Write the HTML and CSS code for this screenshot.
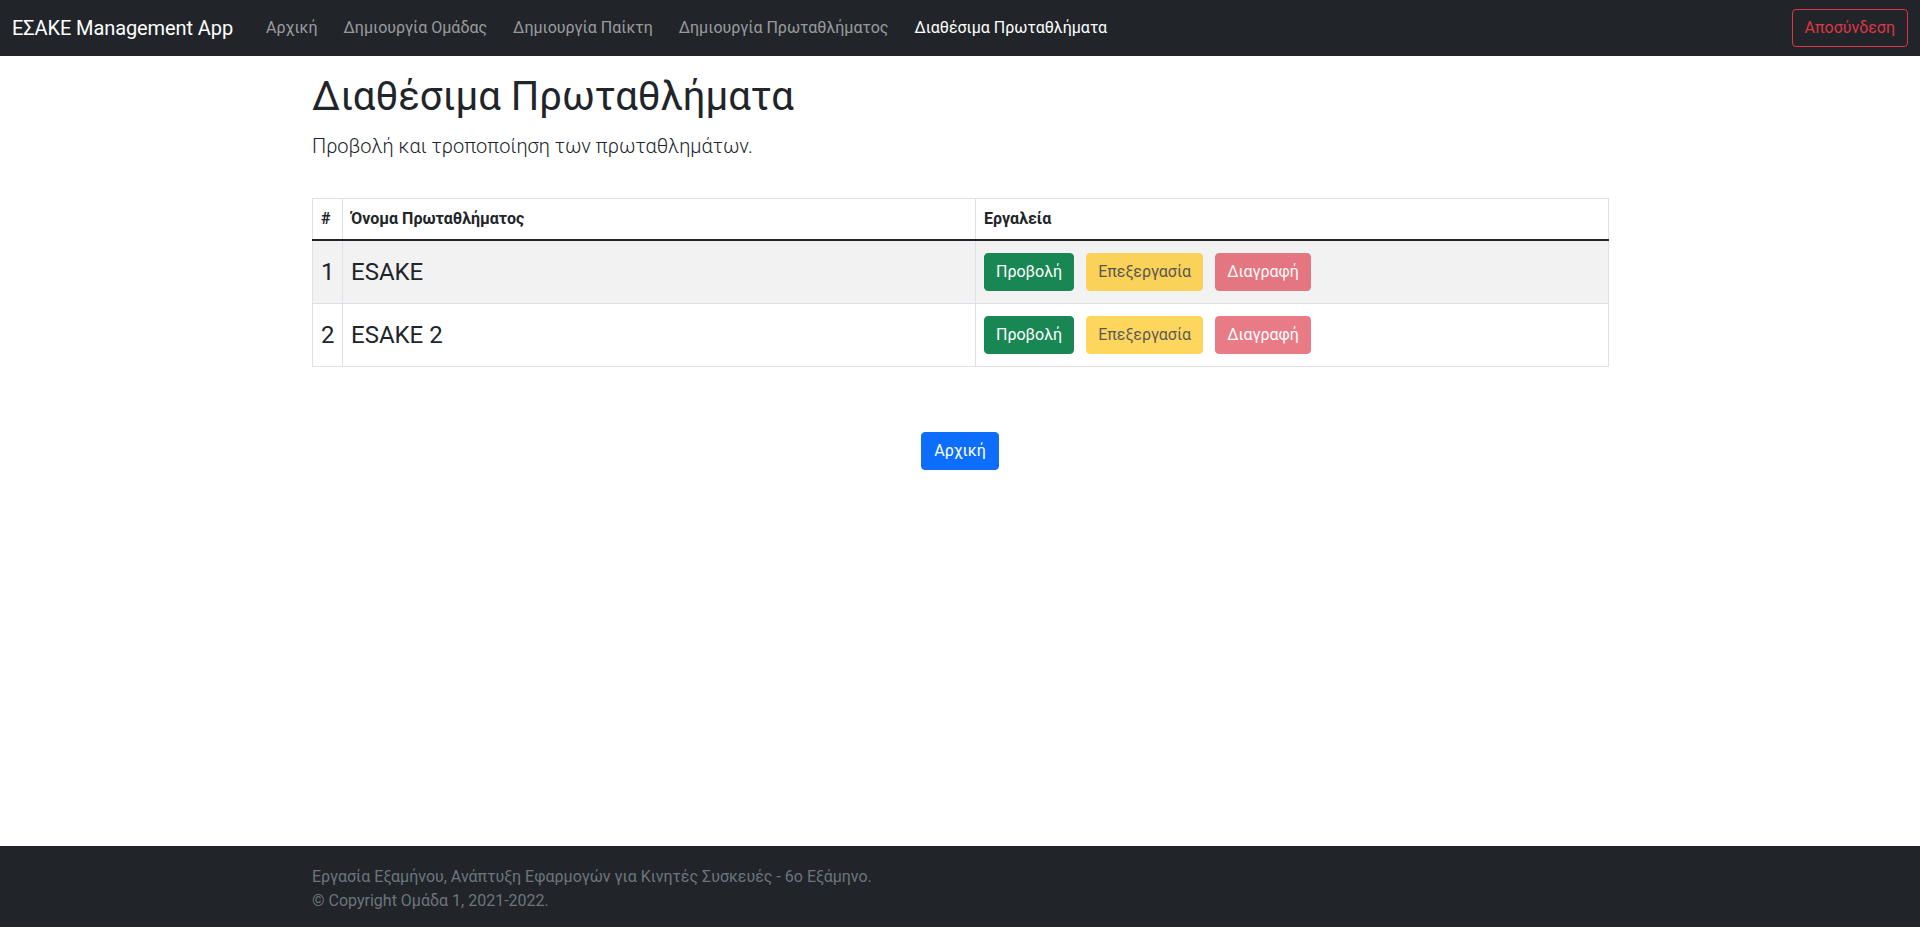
FILE: index.html
```html
<!DOCTYPE html>
<html lang="el">
<head>
<meta charset="utf-8">
<title>ΕΣΑΚΕ Management App</title>
<link rel="stylesheet" href="styles.css">
</head>
<body>
<nav class="navbar">
  <a class="brand" href="#">ΕΣΑΚΕ Management App</a>
  <ul class="nav">
    <li><a class="nav-link" href="#">Αρχική</a></li>
    <li><a class="nav-link" href="#">Δημιουργία Ομάδας</a></li>
    <li><a class="nav-link" href="#">Δημιουργία Παίκτη</a></li>
    <li><a class="nav-link" href="#">Δημιουργία Πρωταθλήματος</a></li>
    <li><a class="nav-link active" href="#">Διαθέσιμα Πρωταθλήματα</a></li>
  </ul>
  <button class="btn btn-outline-danger logout">Αποσύνδεση</button>
</nav>

<main class="main">
  <div class="container">
    <h1 class="title">Διαθέσιμα Πρωταθλήματα</h1>
    <p class="lead">Προβολή και τροποποίηση των πρωταθλημάτων.</p>

    <table class="table">
      <colgroup>
        <col class="col-num">
        <col class="col-name">
        <col class="col-tools">
      </colgroup>
      <thead>
        <tr>
          <th>#</th>
          <th>Όνομα Πρωταθλήματος</th>
          <th>Εργαλεία</th>
        </tr>
      </thead>
      <tbody>
        <tr class="striped">
          <td class="big">1</td>
          <td class="big">ESAKE</td>
          <td>
            <div class="tools">
              <button class="btn btn-success">Προβολή</button>
              <button class="btn btn-warning disabled">Επεξεργασία</button>
              <button class="btn btn-danger disabled">Διαγραφή</button>
            </div>
          </td>
        </tr>
        <tr>
          <td class="big">2</td>
          <td class="big">ESAKE 2</td>
          <td>
            <div class="tools">
              <button class="btn btn-success">Προβολή</button>
              <button class="btn btn-warning disabled">Επεξεργασία</button>
              <button class="btn btn-danger disabled">Διαγραφή</button>
            </div>
          </td>
        </tr>
      </tbody>
    </table>

    <div class="home-row">
      <button class="btn btn-primary">Αρχική</button>
    </div>
  </div>
</main>

<footer class="footer">
  <div class="container">
    <p class="footer-text">Εργασία Εξαμήνου, Ανάπτυξη Εφαρμογών για Κινητές Συσκευές - 6ο Εξάμηνο.<br>© Copyright Ομάδα 1, 2021-2022.</p>
  </div>
</footer>
</body>
</html>
```

FILE: styles.css
```css
* { box-sizing: border-box; }

html, body {
  margin: 0;
  padding: 0;
}

body {
  font-family: "Segoe UI", Roboto, "Noto Sans", "Liberation Sans", sans-serif;
  font-size: 16px;
  line-height: 1.5;
  color: #212529;
  background: #fff;
  min-height: 927px;
  display: flex;
  flex-direction: column;
}

/* Navbar */
.navbar {
  height: 56px;
  background: #212529;
  display: flex;
  align-items: center;
  padding: 0 12px;
}

.brand {
  color: #fff;
  font-size: 20px;
  line-height: 30px;
  text-decoration: none;
  margin-right: 20px;
  white-space: nowrap;
  letter-spacing: -0.1px;
}

.nav {
  list-style: none;
  margin: 0;
  padding: 0;
  display: flex;
}

.nav-link {
  display: block;
  padding: 8px 13px;
  color: rgba(255, 255, 255, 0.55);
  text-decoration: none;
  white-space: nowrap;
}

.nav-link.active {
  color: #fff;
}

.logout {
  margin-left: auto;
}

/* Buttons */
.btn {
  display: inline-block;
  font-family: inherit;
  font-size: 16px;
  line-height: 24px;
  padding: 6px 12px;
  border: 1px solid transparent;
  border-radius: 4px;
  background: transparent;
  white-space: nowrap;
  cursor: pointer;
}

.btn-outline-danger {
  color: #dc3545;
  border-color: #dc3545;
}

.btn-success {
  color: #fff;
  background: #198754;
  border-color: #198754;
}

.btn-warning {
  color: #000;
  background: #ffc107;
  border-color: #ffc107;
}

.btn-danger {
  color: #fff;
  background: #dc3545;
  border-color: #dc3545;
}

.btn-primary {
  color: #fff;
  background: #0d6efd;
  border-color: #0d6efd;
}

.btn.disabled {
  opacity: 0.65;
}

.tools .btn {
  padding: 6px 11px;
}

/* Main */
.main {
  flex: 1;
}

.container {
  width: 1296px;
  margin: 0 auto;
}

.title {
  font-size: 40px;
  font-weight: 400;
  line-height: 1.2;
  margin: 17px 0 10px;
}

.lead {
  font-size: 20px;
  font-weight: 300;
  line-height: 30px;
  margin: 0 0 37px;
}

/* Table */
.table {
  width: 1296px;
  border-collapse: collapse;
  table-layout: fixed;
  margin: 0;
}

.col-num { width: 30px; }
.col-name { width: 633px; }
.col-tools { width: 633px; }

.table th,
.table td {
  border: 1px solid #dee2e6;
  padding: 8px;
  text-align: left;
  vertical-align: middle;
}

.table th {
  font-weight: 700;
  line-height: 24px;
}

.table thead th {
  border-bottom: 2px solid #212529;
}

.table tr.striped td {
  background: #f2f2f2;
}

.table td.big {
  font-size: 24px;
  line-height: 36px;
}

.tools {
  display: flex;
  gap: 12px;
  padding: 4px 0;
}

.home-row {
  text-align: center;
  margin-top: 65px;
}

/* Footer */
.footer {
  background: #212529;
  height: 81px;
  padding-top: 19px;
}

.footer-text {
  margin: 0;
  color: #6c757d;
  line-height: 24px;
}
```
